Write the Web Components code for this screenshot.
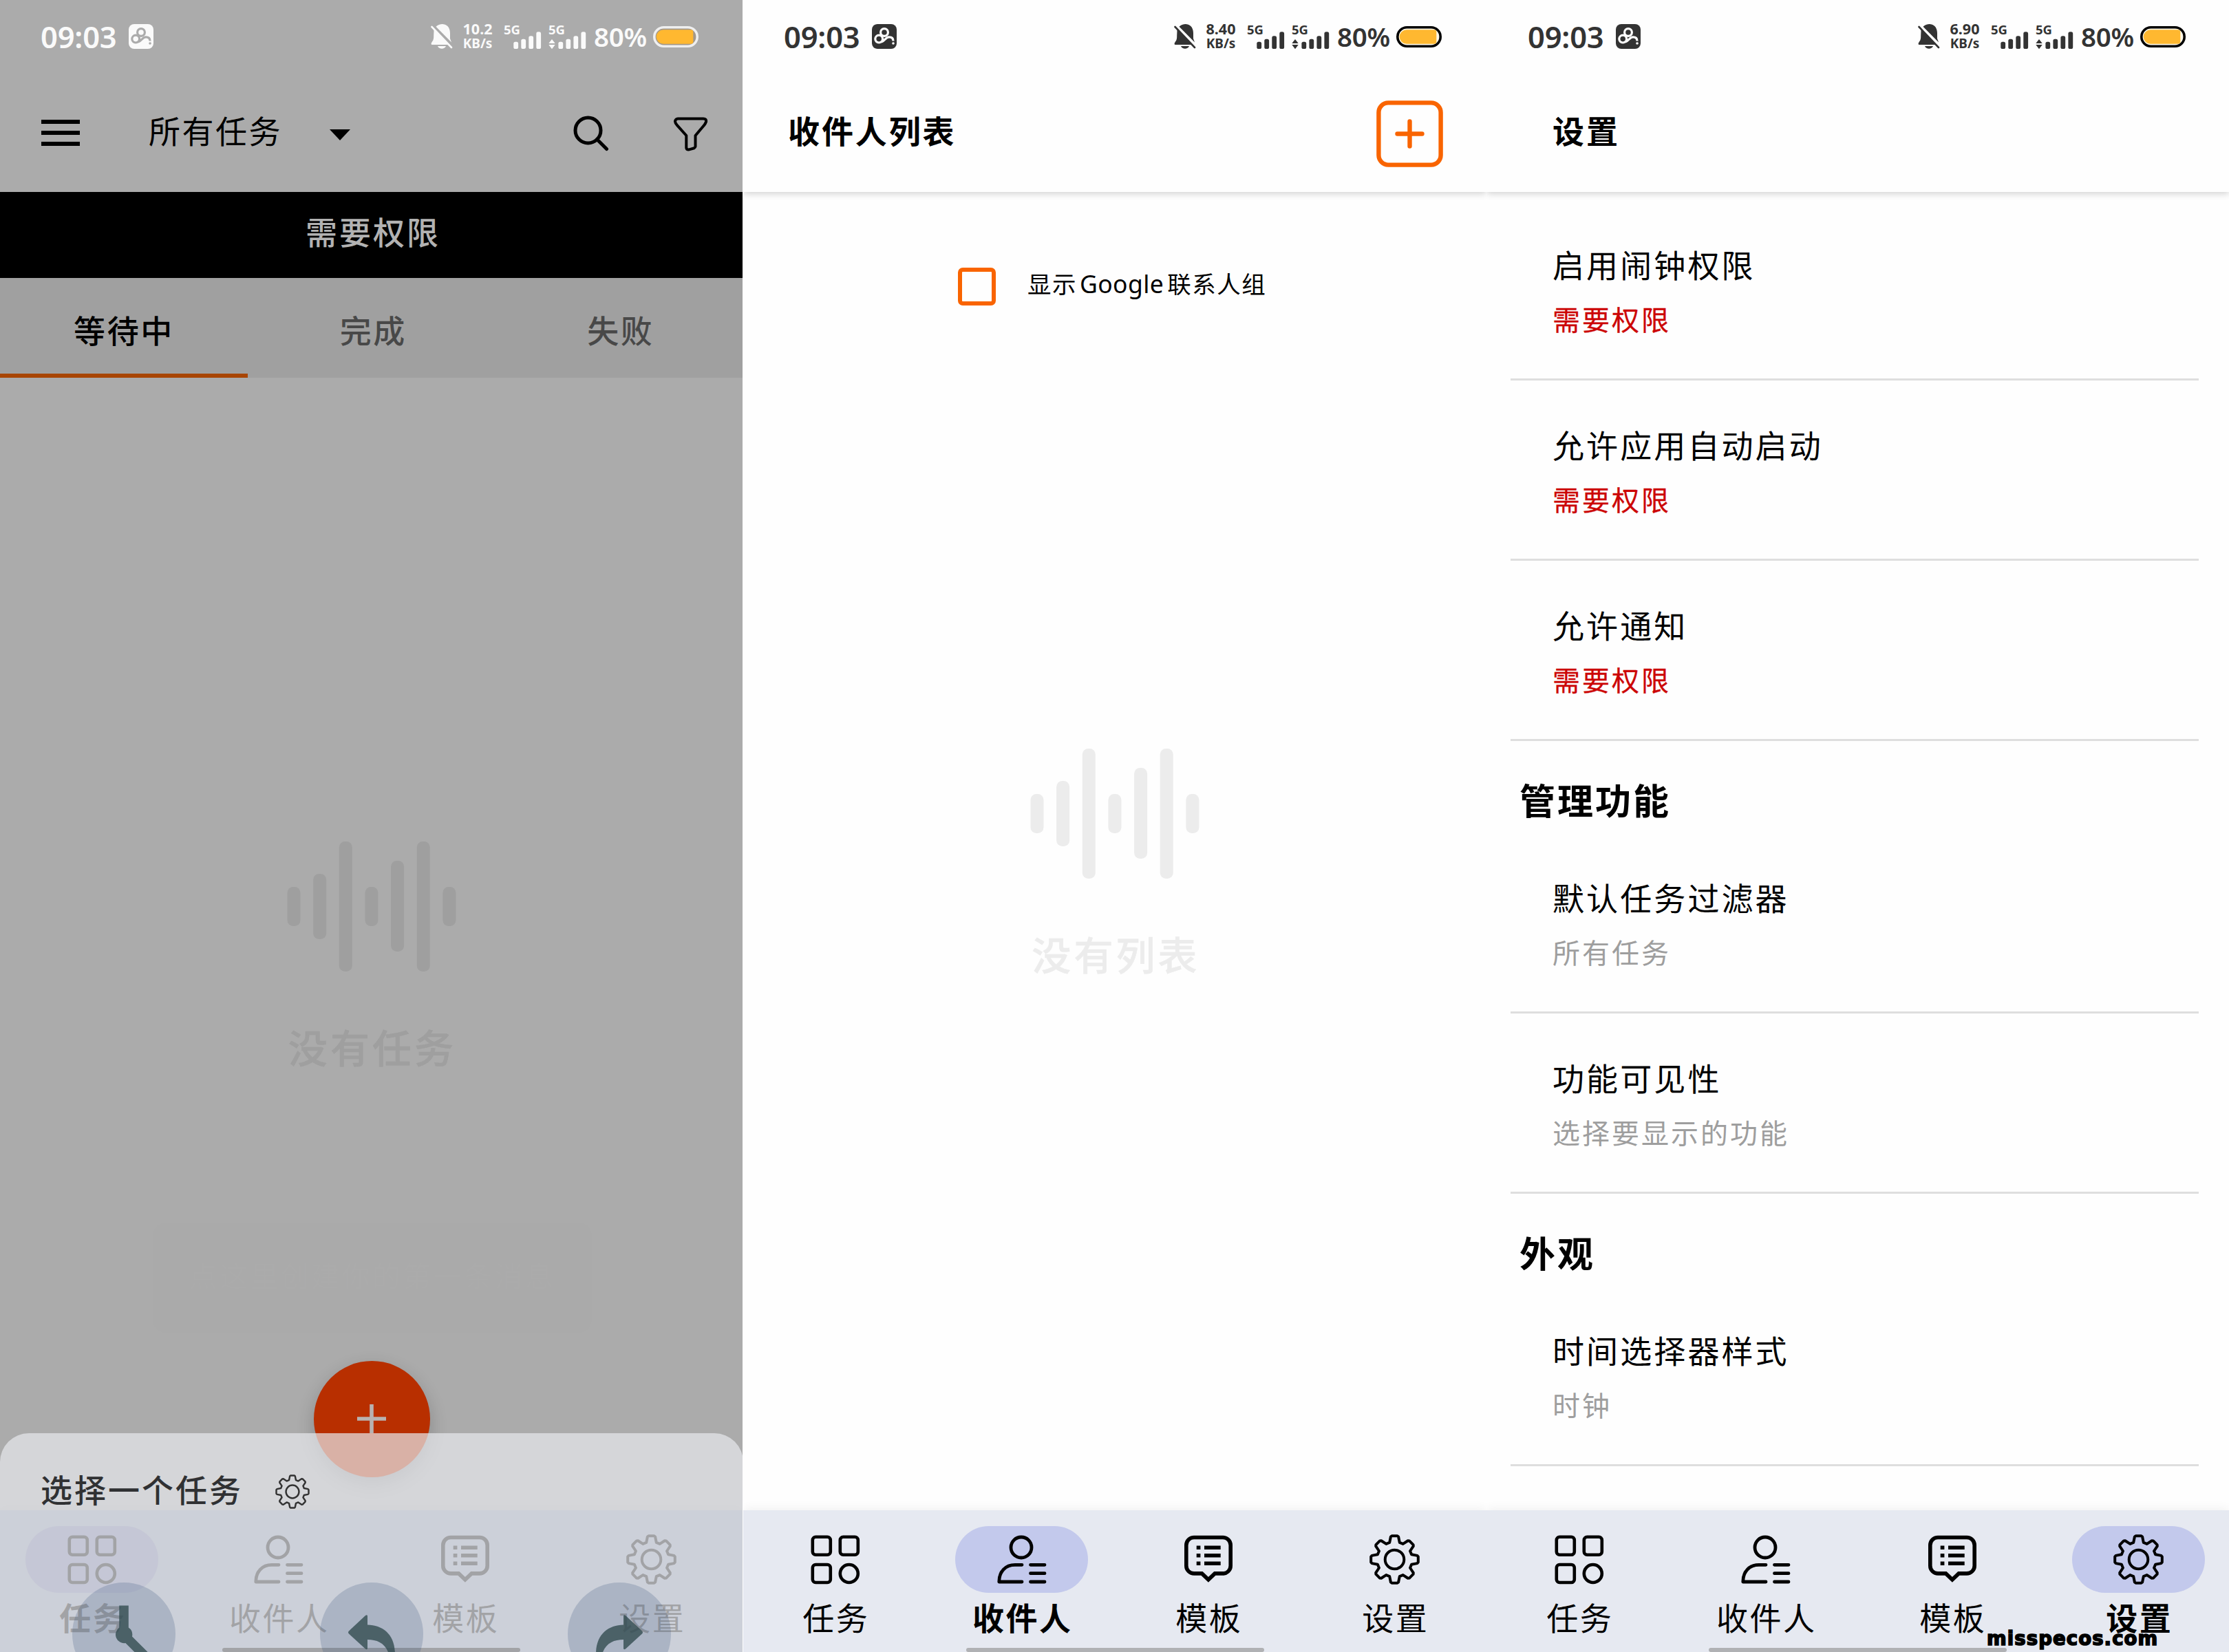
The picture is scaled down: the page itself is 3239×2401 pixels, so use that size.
<!DOCTYPE html>
<html lang="zh-CN">
<head>
<meta charset="utf-8">
<title>任务</title>
<style>
html,body{margin:0;padding:0}
body{width:3239px;height:2401px;overflow:hidden;background:#fefefe;font-family:"Noto Sans","Noto Sans CJK SC",sans-serif;color:#000}
.board{display:flex;width:3239px;height:2401px}
phone-screen{flex:0 0 1080px}
phone-screen:first-child{flex-basis:1079px;margin-right:1px}
phone-screen:last-child{flex-basis:1079px}
</style>
</head>
<body>
<div class="board">
  <phone-screen dim>
    <status-bar slot="status" rate="10.2" light></status-bar>
    <task-toolbar slot="header">所有任务</task-toolbar>
    <permission-banner>需要权限</permission-banner>
    <tab-strip><tab-item active>等待中</tab-item><tab-item>完成</tab-item><tab-item>失败</tab-item></tab-strip>
    <empty-state style="--gap:674px;--tone:#9f9f9f">没有任务</empty-state>
    <hint-bubble slot="overlay">点这里创建你的第一条消息</hint-bubble>
    <add-fab slot="overlay"></add-fab>
    <bottom-nav slot="nav" active="0" dim></bottom-nav>
    <task-sheet slot="overlay">选择一个任务</task-sheet>
  </phone-screen>
  <phone-screen>
    <status-bar slot="status" rate="8.40"></status-bar>
    <title-bar slot="header" style="--inset:65px" add>收件人列表</title-bar>
    <check-row>显示<span>Google</span>联系人组</check-row>
    <empty-state style="--gap:644px;--tone:#ececec">没有列表</empty-state>
    <bottom-nav slot="nav" active="1"></bottom-nav>
  </phone-screen>
  <phone-screen>
    <status-bar slot="status" rate="6.90" style="padding-left:1px"></status-bar>
    <title-bar slot="header" style="--inset:96px">设置</title-bar>
    <settings-list>
      <setting-row warn>启用闹钟权限<span slot="sub">需要权限</span></setting-row>
      <setting-row warn>允许应用自动启动<span slot="sub">需要权限</span></setting-row>
      <setting-row warn>允许通知<span slot="sub">需要权限</span></setting-row>
      <section-title>管理功能</section-title>
      <setting-row>默认任务过滤器<span slot="sub">所有任务</span></setting-row>
      <setting-row>功能可见性<span slot="sub">选择要显示的功能</span></setting-row>
      <section-title>外观</section-title>
      <setting-row>时间选择器样式<span slot="sub">时钟</span></setting-row>
    </settings-list>
    <bottom-nav slot="nav" active="3" style="--shift:1px"></bottom-nav>
    <site-mark slot="overlay">misspecos.com</site-mark>
  </phone-screen>
</div>
<script>
const define = (name, render) => customElements.define(name, class extends HTMLElement {
  constructor(){ super(); this.attachShadow({mode:'open'}); }
  connectedCallback(){ this.shadowRoot.innerHTML = render(this); }
});

// Eight-toothed cog, centred on the origin
const cogPath = (() => {
  const pts = [];
  for (let i = 0; i < 8; i++) {
    const a = i * Math.PI / 4, c = Math.cos(a), s = Math.sin(a);
    for (const [x, y] of [[-7.3,-24.6],[-5.6,-33],[-4,-34.3],[4,-34.3],[5.6,-33],[7.3,-24.6]])
      pts.push((x*c - y*s).toFixed(2) + ' ' + (x*s + y*c).toFixed(2));
  }
  return 'M' + pts.join('L') + 'Z';
})();
const cog = (size, sw) => `<svg width="${size}" height="${size}" viewBox="-36.5 -36.5 73 73" fill="none" stroke="currentColor" stroke-width="${sw}" stroke-linejoin="round"><path d="${cogPath}"/><circle r="13.8"/></svg>`;

const navIcons = [
  `<svg width="72" height="72" viewBox="0 0 72 72" fill="none" stroke="currentColor" stroke-width="4.6"><rect x="2.8" y="2.8" width="26" height="26" rx="4.5"/><rect x="42.8" y="2.8" width="26" height="26" rx="4.5"/><rect x="2.8" y="43" width="26" height="26" rx="4.5"/><circle cx="55.8" cy="56" r="13"/></svg>`,
  `<svg width="72" height="72" viewBox="0 0 72 72" fill="none" stroke="currentColor" stroke-width="4.8" stroke-linecap="round" stroke-linejoin="round"><circle cx="35" cy="18" r="15"/><path d="M36 43.3H26C12 43.3 2.8 53 2.8 68H36M48.5 43.3H69M48.5 55.7H69M48.5 68H69"/></svg>`,
  `<svg width="72" height="72" viewBox="0 0 72 72" fill="none" stroke="currentColor" stroke-width="5.6"><path d="M15 3.5H57A11.2 11.2 0 0 1 68.2 14.7V44.7A11.2 11.2 0 0 1 57 55.9H45.3L35.9 64.8L26.5 55.9H15A11.2 11.2 0 0 1 3.8 44.7V14.7A11.2 11.2 0 0 1 15 3.5Z"/><path d="M18.7 18.2H24.4M30 18.2H53.7M18.7 29.8H24.4M30 29.8H53.7M18.7 41.3H24.4M30 41.3H53.7"/></svg>`,
  cog(73, 4)
];

define('phone-screen', el => `<style>
:host{position:relative;display:flex;flex-direction:column;height:2401px;overflow:hidden;background:${el.hasAttribute('dim')?'#ababab':'#fefefe'}}
.top{flex:0 0 279px;display:flex;flex-direction:column;${el.hasAttribute('dim')?'':'box-shadow:0 2px 10px rgba(0,0,0,.2);z-index:1;background:#fefefe'}}
main{flex:1;min-height:0;overflow:hidden;display:flex;flex-direction:column}
</style><div class="top"><slot name="status"></slot><slot name="header"></slot></div><main><slot></slot></main><slot name="nav"></slot><slot name="overlay"></slot>`);

define('status-bar', el => {
  const light = el.hasAttribute('light');
  const bars = x => [[0,62.7],[11,58.7],[22,54.3],[33,48.3]].map(([dx,y]) => `<rect x="${x+dx}" y="${y-25}" width="6.8" height="${73-y}" rx="2.6"/>`).join('');
  return `<style>
:host{display:flex;flex:0 0 106px;height:106px;align-items:center;color:${light?'#fafafa':'#333'};font-family:"Noto Sans",sans-serif;white-space:nowrap}
svg{display:block;flex:none;fill:currentColor}
.time{width:128px;margin-left:59px;font-size:43.5px;font-weight:600;line-height:60px;letter-spacing:-.2px}
.app{margin-right:403px}
.rate{width:46px;margin:0 0 0 13px;text-align:center;font-weight:700;line-height:22px}
.rate div:first-child{font-size:21.5px}.rate div:last-child{font-size:19px}
.rate div{margin-top:-1px}
.sig{margin-left:14px;overflow:visible}
.pct{width:82px;margin-left:11px;font-size:38.5px;font-weight:600;line-height:60px;letter-spacing:-.3px}
.bat{margin-left:4px}
</style>
<div class="time">09:03</div>
<svg class="app" width="36" height="36" viewBox="0 0 36 36"><rect width="36" height="36" rx="8"/><g fill="none" stroke="${light?'#ababab':'#fff'}" stroke-width="3.2"><circle cx="18" cy="12" r="5.4"/><circle cx="10.2" cy="21.6" r="5.4"/><path d="M14 26C18 25 20 18.8 25 18.8C29 18.8 31 21 31 24.5"/></g><circle cx="31" cy="28" r="1.8" fill="${light?'#ababab':'#fff'}"/></svg>
<svg width="32" height="38" viewBox="0 0 32 38"><path d="M9 3.5C15-1.5 28 0 28 14V22L30 27.5L7.5 4.7ZM4.6 8.3L27.2 31H1.6C0 31 .5 28.5 2 26.5C4 24 4.2 22 4.2 18ZM10 33H22C20 38 12 38 10 33Z"/><path d="M1.5 5L30 35" stroke="currentColor" stroke-width="2.6" stroke-linecap="round"/></svg>
<div class="rate"><div>${el.getAttribute('rate')}</div><div>KB/s</div></div>
<svg class="sig" width="121" height="60" viewBox="0 0 121 60"><g font-family="Noto Sans" font-weight="700" font-size="18.5"><text x="1" y="26.6">5G</text><text x="66" y="26.6">5G</text></g>${bars(15.3)}${bars(80.4)}<path d="M66.3 40L71 34L75.7 40ZM66.3 42L71 48.3L75.7 42Z"/></svg>
<div class="pct">80%</div>
<svg class="bat" width="66" height="31" viewBox="0 0 66 31"><rect x="1.8" y="1.8" width="62.4" height="27.4" rx="13.7" fill="${light?'#a3988a':'#fff8e8'}" stroke="${light?'#efefef':'#000'}" stroke-width="3.6"/><path d="M15 5.2H55Q58.3 5.2 58.3 8.5V22.5Q58.3 25.8 55 25.8H15A10.3 10.3 0 0 1 15 5.2Z" fill="#ffb830"/></svg>`;
});

define('task-toolbar', () => `<style>
:host{display:flex;flex:1;align-items:center;font-size:46px;letter-spacing:2.5px;line-height:60px}
svg{display:block;flex:none}
.t{margin-left:100px;width:263px;margin-top:-6px}
</style>
<svg style="margin-left:60px" width="56" height="40"><path d="M0 4H56M0 20H56M0 36H56" stroke="#000" stroke-width="6.2"/></svg>
<div class="t"><slot></slot></div>
<svg width="30" height="16" style="margin-top:6px"><path d="M0 0H30L15 16Z"/></svg>
<svg width="52" height="52" viewBox="0 0 52 52" style="margin-left:324px;margin-top:3px" fill="none" stroke="#000" stroke-width="5" stroke-linecap="round"><circle cx="21.5" cy="21.5" r="18.5"/><path d="M34.5 34.5L48.5 48.5"/></svg>
<svg width="50" height="50" viewBox="0 0 50 50" style="margin-left:94px;margin-top:5px" fill="none" stroke="#000" stroke-width="4" stroke-linejoin="round"><path d="M6 2.4H43Q47.8 2.6 47 7Q46 10 43.5 12.8L31.5 27V43Q31.2 44.6 29.8 45.3L21.5 47.6Q18.6 47.6 18.3 44.8V27L5 12.2Q1.8 8.6 2 6Q2.8 2.6 6 2.4Z"/></svg>`);

define('title-bar', el => `<style>
:host{display:flex;flex:1;align-items:center;justify-content:space-between;padding:0 63px 0 var(--inset)}
.t{font-size:46px;letter-spacing:2.9px;font-weight:700;line-height:60px;margin-top:-6px}
svg{display:block}
</style><div class="t"><slot></slot></div>${el.hasAttribute('add')?`<svg width="97" height="97" viewBox="0 0 97 97" style="margin-top:4px" fill="none" stroke="#f96400" stroke-width="6.4" stroke-linecap="round"><rect x="3.4" y="3.4" width="90.2" height="90.2" rx="14"/><path d="M48.5 30.5V66.5M30.5 48.5H66.5"/></svg>`:''}`);

define('permission-banner', () => `<style>
:host{display:flex;flex:0 0 125px;justify-content:center;background:#000;color:#b2b2b2;font-size:46px;letter-spacing:3px;line-height:60px;padding:28px 0 0 5px;box-sizing:border-box;font-weight:500}
</style><slot></slot>`);

define('tab-strip', () => `<style>:host{display:flex;flex:0 0 145px;background:#a0a0a0}</style><slot></slot>`);
define('tab-item', el => `<style>
:host{flex:${el.hasAttribute('active')?'0 0 360px':'1'};box-sizing:border-box;text-align:center;padding-top:46px;font-size:46px;letter-spacing:2.6px;line-height:60px;font-weight:500;color:${el.hasAttribute('active')?'#000':'#484848'};${el.hasAttribute('active')?'border-bottom:6px solid #a84503;':'padding-left:5px;'}}
</style><slot></slot>`);

define('empty-state', () => `<style>
:host{display:flex;flex-direction:column;align-items:center;padding-top:var(--gap);color:var(--tone)}
svg{display:block}
.l{margin-top:71px;margin-right:-3px;font-size:57px;letter-spacing:4.1px;line-height:80px;font-weight:500;-webkit-text-stroke:.5px currentColor}
</style><svg width="246" height="189" fill="currentColor">${[[66,57],[47,95],[0,189],[66,57],[28,132],[0,189],[66,57]].map(([y,h],i)=>`<rect x="${(.5+i*37.65).toFixed(2)}" y="${y}" width="19" height="${h}" rx="8.5"/>`).join('')}</svg><div class="l"><slot></slot></div>`);

define('hint-bubble', () => `<style>
:host{position:absolute;left:222px;top:1777px;width:638px;height:160px;border-radius:20px;background:#aaaaaa;display:flex;justify-content:center;box-sizing:border-box;padding-top:47px;font-size:41px;letter-spacing:3.4px;line-height:60px;color:#ababab;white-space:nowrap}
</style><slot></slot>`);

define('add-fab', () => `<style>
:host{position:absolute;left:455.5px;top:1977.5px;width:169px;height:169px;border-radius:50%;background:#b82f00;box-shadow:0 10px 26px rgba(0,0,0,.2);display:flex;align-items:center;justify-content:center}
</style><svg width="42" height="42"><path d="M21 0V42M0 21H42" stroke="#b8b2b0" stroke-width="5.6"/></svg>`);

define('check-row', () => `<style>
:host{display:flex;align-items:center;padding:110px 0 0 312px;line-height:55px;font-size:34.5px;letter-spacing:1.5px}
i{width:43px;height:43px;border:6px solid #f96400;border-radius:7px;margin-right:46px}
.l{margin-top:-8px}
::slotted(span){margin:0 5px 0 4px;font-size:35.5px;letter-spacing:.4px}
</style><i></i><div class="l"><slot></slot></div>`);

define('settings-list', () => `<style>:host{display:flex;flex-direction:column;padding:12px 44px 0 35px}</style><slot></slot>`);
define('setting-row', el => `<style>
:host{display:flex;flex-direction:column;flex:0 0 262px;box-sizing:border-box;border-bottom:3px solid #dedede;padding:64px 0 0 61px;font-size:46px;letter-spacing:3.1px;line-height:60px}
.s{font-size:40px;letter-spacing:3px;margin-top:20px;color:${el.hasAttribute('warn')?'#cc0505':'#9e9e9e'};-webkit-text-stroke:${el.hasAttribute('warn')?'.3px':'0'} currentColor}
</style><div><slot></slot></div><div class="s"><slot name="sub"></slot></div>`);
define('section-title', () => `<style>
:host{display:block;flex:0 0 134px;box-sizing:border-box;padding:57px 0 0 13px;font-size:52px;letter-spacing:3px;line-height:60px;font-weight:700}
</style><slot></slot>`);

define('bottom-nav', el => {
  const dim = el.hasAttribute('dim'), act = +el.getAttribute('active');
  return `<style>
:host{position:relative;display:flex;flex-direction:column;flex:0 0 206px;height:206px;background:${dim?'#8e96aa':'#e6e9f1'};box-shadow:0 -2px 14px rgba(0,0,0,${dim?'.03':'.06'})}
.row{display:flex;width:1084px;margin-left:calc(var(--shift,0px) - 2px);padding-top:23px}
.item{flex:1;display:flex;flex-direction:column;align-items:center}
.pill{width:193px;height:97px;border-radius:49px;display:flex;align-items:center;justify-content:center}
.on .pill{background:${dim?'#777ba0':'#c3c9ec'}}
.l{font-size:46px;letter-spacing:2.4px;margin-right:-2.4px;line-height:60px;margin-top:6px;white-space:nowrap}
.on .l{font-weight:700}
svg{display:block}
.home{width:433px;height:12px;border-radius:5px;background:${dim?'#000':'#b0b1b4'};margin:14px auto 0}
</style><div class="row">${['任务','收件人','模板','设置'].map((t,i)=>`<div class="item${i===act?' on':''}"><div class="pill">${navIcons[i]}</div><div class="l">${t}</div></div>`).join('')}</div><div class="home"></div>`;
});

define('task-sheet', () => `<style>
:host{position:absolute;left:0;top:2083px;width:1080px;height:318px;border-radius:42px 42px 0 0;background:rgba(231,232,236,.7);overflow:hidden;display:flex;flex-direction:column;box-sizing:border-box;padding-top:49px}
.h{display:flex;flex:none;align-items:center;height:72px;padding-left:59px;color:#333}
.t{width:341px;font-size:46px;letter-spacing:3px;line-height:60px;font-weight:500;margin-top:-6px;color:#303133}
svg{display:block}
.acts{display:flex;flex:none;justify-content:space-around;padding-top:96px}
.acts svg{flex:none;border-radius:50%;background:rgba(40,70,115,.2);color:rgba(45,72,76,.77)}
</style><div class="h"><div class="t"><slot></slot></div>${cog(50,3.6)}</div>
<div class="acts">
<svg width="150" height="150" viewBox="0 0 150 150" fill="currentColor"><path d="M68.2 33.5H81.8V65.5A12.5 12.5 0 0 1 87 78.4L112 103.4L102.4 113L77.4 88A12.5 12.5 0 0 1 68.2 65.5Z"/></svg>
<svg width="150" height="150" viewBox="0 0 150 150" fill="currentColor"><path d="M42 70.5L66 48Q69 46 69 49V61.5C91 62 109 75 109 104H100C95 88 83 83 69 83V95.5Q69 98.5 66 96.5L42 74.5Q40 72.5 42 70.5Z"/></svg>
<svg width="150" height="150" viewBox="0 0 150 150" fill="currentColor"><path transform="matrix(-1 0 0 1 150 0)" d="M42 70.5L66 48Q69 46 69 49V61.5C91 62 109 75 109 104H100C95 88 83 83 69 83V95.5Q69 98.5 66 96.5L42 74.5Q40 72.5 42 70.5Z"/></svg>
</div>`);

define('site-mark', () => `<style>
:host{position:absolute;left:727px;top:2364px;font:700 27.5px/34px "DejaVu Sans",sans-serif;letter-spacing:1.1px;color:#000;-webkit-text-stroke:1.6px #000;white-space:nowrap}
</style><slot></slot>`);
</script>
</body>
</html>
